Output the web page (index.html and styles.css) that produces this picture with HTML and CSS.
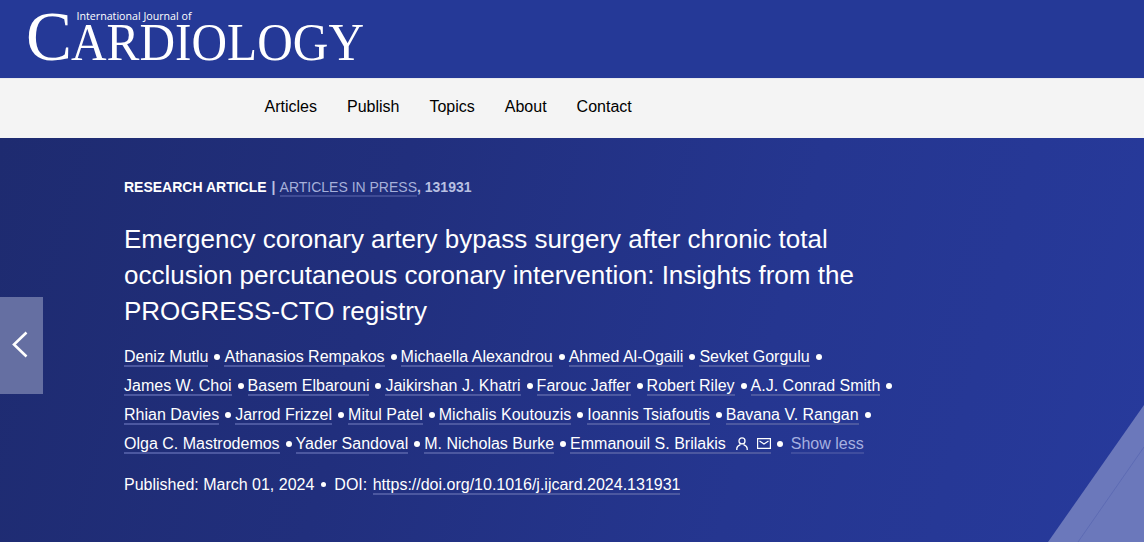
FILE: index.html
```html
<!DOCTYPE html>
<html lang="en">
  <head>
    <meta charset="UTF-8" />
    <meta name="viewport" content="width=device-width, initial-scale=1.0" />
    <title>International Journal of Cardiology</title>
    <link rel="stylesheet" href="styles.css">
  </head>
  <body>
    <header class="header">
      <a href="#" class="logo">
        <svg width="380" height="78" viewBox="0 0 380 78" fill="#fff">
          <text class="logo-small" x="76.5" y="20" textLength="115" lengthAdjust="spacingAndGlyphs">International Journal of</text>
          <text class="logo-serif" x="26" y="60" font-size="70" textLength="46" lengthAdjust="spacingAndGlyphs">C</text>
          <text class="logo-serif" x="71" y="60" font-size="53" textLength="293" lengthAdjust="spacingAndGlyphs">ARDIOLOGY</text>
        </svg>
      </a>
    </header>

    <nav class="nav">
      <a href="#">Articles</a>
      <a href="#">Publish</a>
      <a href="#">Topics</a>
      <a href="#">About</a>
      <a href="#">Contact</a>
    </nav>

    <main class="article">
      <svg class="corner" width="96" height="137" viewBox="0 0 96 137">
        <path d="M96 0V137H0z" fill="#6b78bb" />
        <path d="M96 42L30 137" stroke="#5d6bb4" stroke-width="1" />
      </svg>
      <a href="#" class="prev" aria-label="Previous article">
        <svg width="43" height="97" viewBox="0 0 43 97" fill="none" stroke="#fff" stroke-width="2.6">
          <path d="M26.5 35.5L14 47.5L26.5 59.5" />
        </svg>
      </a>

      <div class="article-type">
        <b>RESEARCH ARTICLE</b> <span class="muted"><b class="divider">|</b> <a href="#">ARTICLES IN PRESS</a><b>, 131931</b></span>
      </div>
      <h1>Emergency coronary artery bypass surgery after chronic total occlusion percutaneous coronary intervention: Insights from the PROGRESS-CTO registry</h1>

      <ul class="authors">
        <li><a href="#">Deniz Mutlu</a></li>
        <li><a href="#">Athanasios Rempakos</a></li>
        <li><a href="#">Michaella Alexandrou</a></li>
        <li><a href="#">Ahmed Al-Ogaili</a></li>
        <li><a href="#">Sevket Gorgulu</a></li>
        <li><a href="#">James W. Choi</a></li>
        <li><a href="#">Basem Elbarouni</a></li>
        <li><a href="#">Jaikirshan J. Khatri</a></li>
        <li><a href="#">Farouc Jaffer</a></li>
        <li><a href="#">Robert Riley</a></li>
        <li><a href="#">A.J. Conrad Smith</a></li>
        <li><a href="#">Rhian Davies</a></li>
        <li><a href="#">Jarrod Frizzel</a></li>
        <li><a href="#">Mitul Patel</a></li>
        <li><a href="#">Michalis Koutouzis</a></li>
        <li><a href="#">Ioannis Tsiafoutis</a></li>
        <li><a href="#">Bavana V. Rangan</a></li>
        <li><a href="#">Olga C. Mastrodemos</a></li>
        <li><a href="#">Yader Sandoval</a></li>
        <li><a href="#">M. Nicholas Burke</a></li>
        <li class="corresponding">
          <a href="#">Emmanouil S. Brilakis<svg class="person" width="12" height="13" viewBox="0 0 12 13" fill="none" stroke="#fff" stroke-width="1.3"><circle cx="6" cy="3.9" r="3" /><path d="M0.8 13V11.5C0.8 9.2 2.5 8.4 4.4 7.6M11.2 13V11.5C11.2 9.2 9.5 8.4 7.6 7.6" /></svg><svg class="mail" width="14" height="11" viewBox="0 0 14 11" fill="none" stroke="#fff" stroke-width="1.2"><path d="M0.6 0.6H13.4V10.4H0.6zM2.5 3L7 6L11.5 3" /></svg></a>
        </li>
        <li class="toggle"><a href="#">Show less</a></li>
      </ul>

      <p class="published">Published: March 01, 2024<span class="dot"></span>DOI: <a href="#">https://doi.org/10.1016/j.ijcard.2024.131931</a></p>
    </main>
  </body>
</html>
```

FILE: styles.css
```css
body {
  margin: 0;
  font-family: "Liberation Sans", Arial, sans-serif;
  font-size: 16px;
  color: #fff;
  overflow: hidden;
}
a {
  color: inherit;
  text-decoration: none;
}
.header {
  height: 78px;
  background-color: #253997;
}
.logo,
.logo svg {
  display: block;
}
.logo svg {
  overflow: visible;
}
.logo-small {
  font-family: "Open Sans", sans-serif;
  font-size: 11.5px;
}
.logo-serif {
  font-family: "Liberation Serif", "Times New Roman", serif;
}
.nav {
  box-sizing: border-box;
  height: 60px;
  padding-left: 264.5px;
  padding-bottom: 4px;
  display: flex;
  align-items: center;
  gap: 30px;
  background-color: #f4f4f4;
  border-top: 1px solid #e9eaef;
  color: #000;
}
.article {
  position: relative;
  box-sizing: border-box;
  height: 404px;
  padding: 40px 0 0 124px;
  background: linear-gradient(105deg, #1e2b70 0%, #212f7d 33%, #253690 66%, #273a9c 100%);
}
.corner {
  position: absolute;
  right: 0;
  bottom: 0;
}
.prev {
  position: absolute;
  left: 0;
  top: 159px;
  width: 43px;
  height: 97px;
  background-color: #656fa2;
}
.article-type {
  font-size: 14px;
  line-height: 18px;
}
.muted {
  color: #b9c0e2;
}
.muted a {
  color: #a6b0da;
  border-bottom: 2px solid #3f4b95;
}
.divider {
  margin: 0 1px;
}
h1 {
  width: 760px;
  margin: 25px 0 0;
  font-size: 26px;
  font-weight: normal;
  line-height: 36px;
}
.authors {
  width: 780px;
  margin: 13px 0 0;
  padding: 0;
  list-style: none;
  display: flex;
  flex-wrap: wrap;
}
.authors li {
  display: flex;
  align-items: center;
  height: 29px;
  white-space: nowrap;
}
.authors a,
.published a {
  line-height: 16px;
  border-bottom: 2px solid #4c58a0;
}
.authors a {
  padding-top: 2px;
}
.authors li::after {
  content: "";
  width: 6px;
  height: 6px;
  margin: 0 4px 0 6px;
  border-radius: 50%;
  background-color: #fff;
}
.authors .toggle::after {
  display: none;
}
.authors .toggle a {
  margin-left: 4px;
  color: #a6b0e0;
  border-bottom-color: #3f4d9f;
}
.person {
  margin: 0 9px 0 10px;
  vertical-align: -1px;
}
.mail {
  vertical-align: 0;
}
.published {
  margin: 18px 0 0;
  line-height: 18px;
}
.published a {
  display: inline-block;
  margin-left: 1px;
}
.dot {
  display: inline-block;
  width: 5px;
  height: 5px;
  margin: 0 8px 0 7px;
  border-radius: 50%;
  background-color: #fff;
  vertical-align: 3px;
}
```
